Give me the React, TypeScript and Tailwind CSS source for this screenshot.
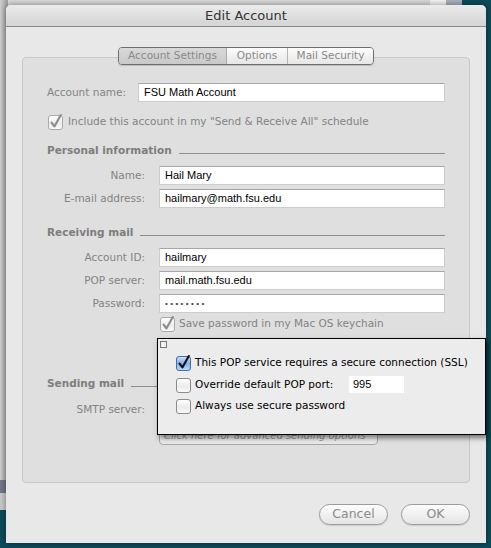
import React from 'react';

const ui = "font-['DejaVu_Sans','Liberation_Sans',sans-serif]";
const field = "font-['Liberation_Sans',Arial,sans-serif]";

function Box({ checked, blue }: { checked?: boolean; blue?: boolean }) {
  const id = blue ? 'cbBlue' : checked ? 'cbOn' : 'cbOff';
  return (
    <svg width="15" height="16" viewBox="0 0 15 16" className="shrink-0 overflow-visible">
      <defs>
        <linearGradient id={id} x1="0" y1="0" x2="0" y2="1">
          {blue ? (
            <>
              <stop offset="0" stopColor="#cfe3fb" />
              <stop offset="0.5" stopColor="#7fb0ea" />
              <stop offset="1" stopColor="#b9dcff" />
            </>
          ) : (
            <>
              <stop offset="0" stopColor="#ffffff" />
              <stop offset="0.55" stopColor="#ececec" />
              <stop offset="1" stopColor="#fafafa" />
            </>
          )}
        </linearGradient>
      </defs>
      <rect
        x="0.5"
        y="1.5"
        width="14"
        height="14"
        rx="2.5"
        fill={`url(#${id})`}
        stroke={blue ? '#4a6e9a' : checked ? '#a9a9a9' : '#8a8a8a'}
      />
      {checked && (
        <path
          d="M3.6 8.6 L6.4 12.4 L12.8 1"
          fill="none"
          stroke={blue ? '#111' : '#8c8c8c'}
          strokeWidth="2.1"
          strokeLinecap="round"
          strokeLinejoin="round"
        />
      )}
    </svg>
  );
}

function Input({ value, className = '' }: { value: React.ReactNode; className?: string }) {
  return (
    <div
      className={`h-[19px] bg-white border border-[#cdcdcd] border-t-[#a6a6a6] flex items-center px-[5px] text-[11px] text-black whitespace-nowrap ${field} ${className}`}
    >
      {value}
    </div>
  );
}

function Row({ label, value, mt }: { label: string; value: React.ReactNode; mt: string }) {
  return (
    <div className={`flex items-center ${mt}`}>
      <div className="w-[98px] text-right text-[10.5px] text-[#838383] whitespace-nowrap">{label}</div>
      <Input value={value} className="ml-[14px] flex-1" />
    </div>
  );
}

function Header({ title, mt }: { title: string; mt: string }) {
  return (
    <div className={`flex items-end ${mt}`}>
      <span className="text-[10.5px] font-bold text-[#7d7d7d] leading-[14px] whitespace-nowrap">{title}</span>
      <div className="flex-1 h-px bg-[#8e8e8e] ml-[7px] mb-[3px]" />
    </div>
  );
}

export default function App() {
  return (
    <div className={`relative w-[491px] h-[548px] overflow-hidden bg-[#0c4c5a] ${ui}`}>
      {/* desktop behind the sheet */}
      <div className="absolute left-0 top-0 w-[462px] h-[6px] bg-[#d9d9d9]" />
      <div className="absolute left-[430px] top-0 w-[16px] h-[6px] bg-[#f4f4f4]" />
      <div className="absolute left-[446px] top-0 w-[16px] h-[6px] bg-[#aab0bc]" />
      <div className="absolute left-0 top-0 w-[8px] h-[480px] bg-gradient-to-r from-[#d0d0d0] to-[#9c9c9c]" />
      <div className="absolute left-0 top-[480px] w-[8px] h-[13px] bg-[#74778a]" />
      <div className="absolute left-0 top-[493px] w-[8px] h-[17px] bg-[#c9c9c9]" />

      {/* sheet window */}
      <div className="relative ml-[6px] mt-[5px] w-[480px] h-[538px] bg-[#e8e8e8] rounded-t-[5px] shadow-[0_0_6px_rgba(0,0,0,0.45)] flex flex-col">
        <div className="h-[22px] shrink-0 rounded-t-[5px] bg-gradient-to-b from-[#ebebeb] to-[#d4d4d4] border-b border-[#8c8c8c] flex items-center justify-center text-[13px] text-[#333]">
          Edit Account
        </div>

        {/* tabs */}
        <div className="relative z-10 mt-[20px] flex ml-[112px] w-[256px] h-[18px] rounded-[4px] border border-[#6f6f6f] overflow-hidden text-[10.5px] text-[#8a8a8a] shadow-[0_1px_1px_rgba(0,0,0,0.15)] whitespace-nowrap">
          <div className="w-[108px] flex items-center justify-center bg-gradient-to-b from-[#d9d9d9] to-[#c9c9c9] border-r border-[#a9a9a9]">
            Account Settings
          </div>
          <div className="w-[61px] flex items-center justify-center bg-gradient-to-b from-[#fdfdfd] to-[#e6e6e6] border-r border-[#b3b3b3]">
            Options
          </div>
          <div className="flex-1 flex items-center justify-center bg-gradient-to-b from-[#fdfdfd] to-[#e6e6e6]">
            Mail Security
          </div>
        </div>

        {/* group box */}
        <div className="relative -mt-[8px] mx-[16px] h-[426px] rounded-[4px] bg-[#dfdfdf] border border-[#c8c8c8] px-[24px] pt-[25px]">
          <div className="flex items-center">
            <span className="w-[91px] text-[10.5px] text-[#838383] whitespace-nowrap">Account name:</span>
            <Input value="FSU Math Account" className="flex-1" />
          </div>
          <div className="flex items-center mt-[12px] ml-[1px]">
            <Box checked />
            <span className="ml-[5px] text-[10.5px] text-[#838383] whitespace-nowrap">
              Include this account in my "Send &amp; Receive All" schedule
            </span>
          </div>

          <Header title="Personal information" mt="mt-[13px]" />
          <Row label="Name:" value="Hail Mary" mt="mt-[9px]" />
          <Row label="E-mail address:" value="hailmary@math.fsu.edu" mt="mt-[4px]" />

          <Header title="Receiving mail" mt="mt-[17px]" />
          <Row label="Account ID:" value="hailmary" mt="mt-[9px]" />
          <Row label="POP server:" value="mail.math.fsu.edu" mt="mt-[4px]" />
          <Row
            label="Password:"
            value={<span className="text-[8px] tracking-[2.4px] text-[#444]">••••••••</span>}
            mt="mt-[4px]"
          />
          <div className="flex items-center mt-[3px] ml-[113px]">
            <Box checked />
            <span className="ml-[4px] text-[10.5px] text-[#838383] whitespace-nowrap">Save password in my Mac OS keychain</span>
          </div>

          <div className="flex items-center mt-[44px]">
            <span className="text-[10.5px] font-bold text-[#7d7d7d] whitespace-nowrap">Sending mail</span>
            <div className="w-[40px] h-px bg-[#8e8e8e] ml-[7px] mt-[6px]" />
          </div>
          <div className="flex items-center mt-[10px]">
            <div className="w-[98px] text-right text-[10.5px] text-[#838383] whitespace-nowrap">SMTP server:</div>
          </div>
          <div className="ml-[112px] mt-[8px] w-[219px] h-[19px] rounded-[4px] border border-[#a8a8a8] bg-gradient-to-b from-[#fbfbfb] to-[#e9e9e9] flex items-center px-[4px] text-[10px] italic text-[#9a9a9a] whitespace-nowrap overflow-hidden">
            Click here for advanced sending options
          </div>
        </div>

        {/* buttons */}
        <div className="flex justify-end gap-[13px] mt-[21px] mr-[16px]">
          <div className="w-[69px] h-[21px] rounded-full border border-[#9c9c9c] bg-gradient-to-b from-[#fdfdfd] to-[#e4e4e4] flex items-center justify-center text-[12.5px] text-[#8a8a8a] shadow-[0_1px_1px_rgba(0,0,0,0.12)]">
            Cancel
          </div>
          <div className="w-[69px] h-[21px] rounded-full border border-[#9c9c9c] bg-gradient-to-b from-[#fdfdfd] to-[#e4e4e4] flex items-center justify-center text-[12.5px] text-[#8a8a8a] shadow-[0_1px_1px_rgba(0,0,0,0.12)]">
            OK
          </div>
        </div>
      </div>

      {/* SSL options popover */}
      <div className="absolute left-[157px] top-[338px] w-[329px] h-[97px] bg-[#ececec] border border-black shadow-[2px_3px_5px_rgba(0,0,0,0.5)] text-[10.5px] text-black whitespace-nowrap">
        <div className="ml-[2px] mt-[2px] w-[7px] h-[7px] border border-[#777] bg-[#f2f2f2]" />
        <div className="flex flex-col gap-[5px] ml-[18px] mt-[7px]">
          <div className="flex items-center">
            <Box checked blue />
            <span className="ml-[4px]">This POP service requires a secure connection (SSL)</span>
          </div>
          <div className="flex items-center">
            <Box />
            <span className="ml-[4px] w-[154px]">Override default POP port:</span>
            <div className={`w-[55px] h-[17px] bg-white flex items-center px-[4px] text-[11px] ${field}`}>995</div>
          </div>
          <div className="flex items-center">
            <Box />
            <span className="ml-[4px]">Always use secure password</span>
          </div>
        </div>
      </div>
    </div>
  );
}
